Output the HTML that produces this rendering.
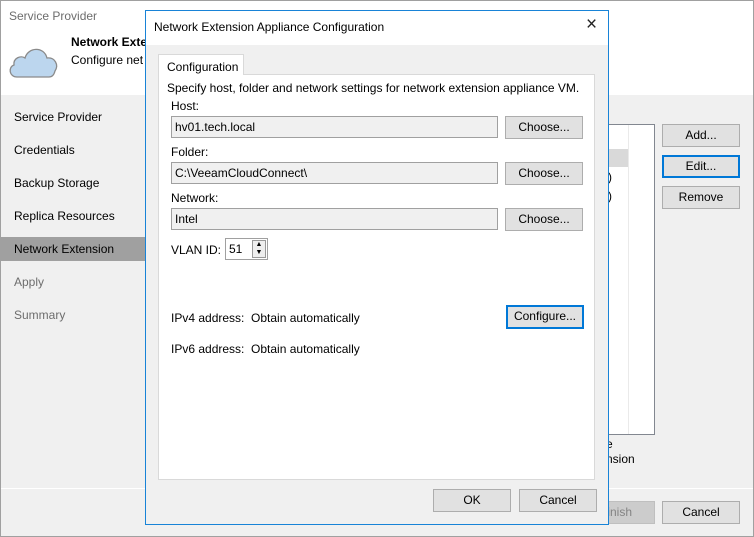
<!DOCTYPE html>
<html><head><style>
*{margin:0;padding:0;box-sizing:border-box}
body{width:754px;height:537px;overflow:hidden;font-family:"Liberation Sans",sans-serif;font-size:12px;color:#000;background:#f0f0f0;position:relative}
.a{position:absolute}
.btn{position:absolute;background:#e1e1e1;border:1px solid #adadad;text-align:center;line-height:20px;font-size:12px}
.blue{border:2px solid #0078d7;line-height:18px}
.inp{position:absolute;background:#f0f0f0;border:1px solid #a0a0a0;padding-left:3px;line-height:20px}
.nav{position:absolute;left:14px;font-size:12px}
</style></head><body>
<div class="a" style="left:0;top:0;width:754px;height:537px;border:1px solid #a0a0a0"></div>
<div class="a" style="left:1px;top:1px;width:752px;height:94px;background:#fff"></div>
<div class="a" style="left:9px;top:9px;color:#6d6d6d">Service Provider</div>
<div class="a" style="left:71px;top:35px;font-weight:bold">Network Exte</div>
<div class="a" style="left:71px;top:53px">Configure net</div>
<svg class="a" style="left:7px;top:43px" width="52" height="36" viewBox="0 0 52 36"><path d="M10 34 C2 34 1 24 7 22 C6 15 14 12 18 15 C21 4 37 3 40 15 C48 14 52 22 48 28 C47 32 45 34 42 34 Z" fill="#bcd6ee" stroke="#8a8a8a" stroke-width="1.3"/></svg>
<div class="a" style="left:0;top:237px;width:145px;height:24px;background:#a0a0a0"></div>
<div class="nav" style="top:110px">Service Provider</div>
<div class="nav" style="top:143px">Credentials</div>
<div class="nav" style="top:176px">Backup Storage</div>
<div class="nav" style="top:209px">Replica Resources</div>
<div class="nav" style="top:242px">Network Extension</div>
<div class="nav" style="top:275px;color:#6d6d6d">Apply</div>
<div class="nav" style="top:308px;color:#6d6d6d">Summary</div>
<div class="a" style="left:590px;top:124px;width:65px;height:311px;background:#fff;border:1px solid #828790"></div>
<div class="a" style="left:628px;top:125px;width:1px;height:309px;background:#eaeaea"></div>
<div class="a" style="left:608px;top:149px;width:20px;height:18px;background:#d9d9d9"></div>
<div class="a" style="left:608px;top:170px">)</div>
<div class="a" style="left:608px;top:189px">)</div>
<div class="a" style="left:606px;top:437px">e</div>
<div class="a" style="left:606px;top:452px">nsion</div>
<div class="btn" style="left:662px;top:124px;width:78px;height:23px">Add...</div>
<div class="btn blue" style="left:662px;top:155px;width:78px;height:23px">Edit...</div>
<div class="btn" style="left:662px;top:186px;width:78px;height:23px">Remove</div>
<div class="a" style="left:1px;top:488px;width:752px;height:1px;background:#fff"></div>
<div class="btn" style="left:577px;top:501px;width:78px;height:23px;background:#cccccc;border-color:#bfbfbf;color:#838383">Finish</div>
<div class="btn" style="left:662px;top:501px;width:78px;height:23px">Cancel</div>

<div class="a" style="left:145px;top:10px;width:464px;height:515px;background:#f0f0f0;border:1px solid #1883d7">
 <div class="a" style="left:0;top:0;width:462px;height:34px;background:#fff"></div>
 <div class="a" style="left:8px;top:9px">Network Extension Appliance Configuration</div>
 <div class="a" style="left:440px;top:3px;font-size:19px;color:#222">×</div>
 <div class="a" style="left:12px;top:63px;width:437px;height:406px;background:#fff;border:1px solid #d9d9d9"></div>
 <div class="a" style="left:12px;top:43px;width:86px;height:21px;background:#fff;border:1px solid #d9d9d9;border-bottom:none;padding:5px 0 0 8px">Configuration</div>
 <div class="a" style="left:21px;top:70px">Specify host, folder and network settings for network extension appliance VM.</div>
 <div class="a" style="left:25px;top:88px">Host:</div>
 <div class="inp" style="left:25px;top:105px;width:327px;height:22px">hv01.tech.local</div>
 <div class="btn" style="left:359px;top:105px;width:78px;height:23px">Choose...</div>
 <div class="a" style="left:25px;top:134px">Folder:</div>
 <div class="inp" style="left:25px;top:151px;width:327px;height:22px">C:\VeeamCloudConnect\</div>
 <div class="btn" style="left:359px;top:151px;width:78px;height:23px">Choose...</div>
 <div class="a" style="left:25px;top:180px">Network:</div>
 <div class="inp" style="left:25px;top:197px;width:327px;height:22px">Intel</div>
 <div class="btn" style="left:359px;top:197px;width:78px;height:23px">Choose...</div>
 <div class="a" style="left:25px;top:232px">VLAN ID:</div>
 <div class="a" style="left:79px;top:227px;width:43px;height:22px;border:1px solid #a0a0a0;background:#fff;padding:3px 0 0 3px">51</div>
 <div class="a" style="left:106px;top:229px;width:14px;height:18px;background:#eee;border:1px solid #999;font-size:7px;text-align:center;line-height:8px">▲<br>▼</div>
 <div class="a" style="left:25px;top:300px">IPv4 address:&nbsp; Obtain automatically</div>
 <div class="btn blue" style="left:360px;top:294px;width:78px;height:24px">Configure...</div>
 <div class="a" style="left:25px;top:331px">IPv6 address:&nbsp; Obtain automatically</div>
 <div class="btn" style="left:287px;top:478px;width:78px;height:23px">OK</div>
 <div class="btn" style="left:373px;top:478px;width:78px;height:23px">Cancel</div>
</div>
</body></html>
